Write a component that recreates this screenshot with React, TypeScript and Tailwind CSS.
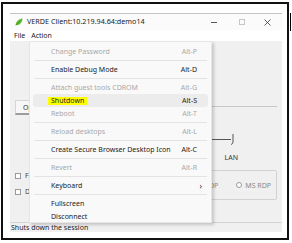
import React from "react";

type MenuEntry =
  | { sep: true }
  | { label: string; shortcut?: string; disabled?: boolean; active?: boolean; arrow?: boolean; sep?: false };

const entries: MenuEntry[] = [
  { label: "Change Password", shortcut: "Alt-P", disabled: true },
  { sep: true },
  { label: "Enable Debug Mode", shortcut: "Alt-D" },
  { sep: true },
  { label: "Attach guest tools CDROM", shortcut: "Alt-G", disabled: true },
  { label: "Shutdown", shortcut: "Alt-S", active: true },
  { label: "Reboot", shortcut: "Alt-T", disabled: true },
  { sep: true },
  { label: "Reload desktops", shortcut: "Alt-L", disabled: true },
  { sep: true },
  { label: "Create Secure Browser Desktop Icon", shortcut: "Alt-C" },
  { sep: true },
  { label: "Revert", shortcut: "Alt-R", disabled: true },
  { sep: true },
  { label: "Keyboard", arrow: true },
  { sep: true },
  { label: "Fullscreen" },
  { label: "Disconnect" },
];

const Leaf = () => (
  <svg width="8" height="8" viewBox="0 0 8 8">
    <path d="M0.5 7.5 C1 3.5 3.5 1 7.5 0.5 C7.2 4.5 5 7 1.5 7.2 Z" fill="#5cb82e" />
    <path d="M1 7 L5 3" stroke="#3f8f1c" strokeWidth="0.6" />
  </svg>
);

const ActionMenu = () => (
  <div className="absolute left-[19px] top-[27px] w-[183px] h-[182px] bg-[#f9f9f9] pt-[3px] shadow-[2px_2px_3px_rgba(0,0,0,0.18)] border border-[#e6e6e6]">
    {entries.map((e, i) =>
      e.sep ? (
        <div key={i} className="h-[5px] flex items-center mx-[4px]">
          <div className="h-px w-full bg-[#e3e3e3]" />
        </div>
      ) : (
        <div
          key={i}
          className={`mx-[3px] h-[13px] flex items-center rounded-[3px] ${e.active ? "bg-[#ececec]" : ""} ${
            e.disabled ? "text-[#a8a8a8]" : "text-[#1b1b1b]"
          }`}
        >
          {e.active ? (
            <span className="ml-[15px] px-[3px] bg-[#ffff00] leading-[8px]">{e.label}</span>
          ) : (
            <span className="ml-[18px]">{e.label}</span>
          )}
          {e.shortcut && <span className="ml-auto mr-[11px]">{e.shortcut}</span>}
          {e.arrow && <span className="ml-auto mr-[6px] text-[8px]">›</span>}
        </div>
      ),
    )}
  </div>
);

export default function App() {
  return (
    <div
      className="w-[292px] h-[243px] bg-white relative overflow-hidden pt-[2px] pl-px text-[7px] leading-none"
      style={{ fontFamily: '"Noto Sans", "Open Sans", sans-serif' }}
    >
      <div className="absolute left-[290px] top-[13px] w-px h-[18px] bg-black" />
      <div className="w-[288px] h-[238px] border-2 border-[#111] pl-[7px] pt-[9px]">
        <div className="w-[272px] h-[219px] flex flex-col relative border-t border-[#c4c4c4]">
          {/* title bar */}
          <div className="h-[16px] bg-[#fbfbfb] flex items-center pl-[5px]">
            <Leaf />
            <span className="ml-[4px] text-[7.2px] text-[#1c1c1c]">VERDE Client:10.219.94.64:demo14</span>
            <div className="ml-auto flex items-center">
              <div className="w-[6px] h-px bg-[#555]" />
              <div className="ml-[22px] w-[6px] h-[6px] border border-[#c6c6c6]" />
              <svg className="ml-[19px] mr-[11px]" width="7" height="7" viewBox="0 0 7 7">
                <path d="M0.5 0.5 L6.5 6.5 M6.5 0.5 L0.5 6.5" stroke="#333" strokeWidth="0.8" />
              </svg>
            </div>
          </div>
          {/* menu bar */}
          <div className="h-[11px] bg-white flex items-center pl-[4px] text-[#1b1b1b]">
            <span>File</span>
            <span className="ml-[6px]">Action</span>
          </div>
          {/* content */}
          <div className="flex-1 bg-[#f0f0f0] pl-[5px] pr-[5px] flex flex-col">
            <div className="mt-[59px] h-[15px] flex items-start">
              <div className="w-[60px] h-[15px] border-l border-t border-[#d6d6d6] border-b-2 border-b-[#9c9c9c] bg-[#f7f7f7] flex items-center pl-[7px] text-[#333]">
                Options
              </div>
              <div className="flex-1 h-[7px] border-b border-[#c8c8c8]" />
            </div>
            <div className="mt-[19px] h-[10px] flex items-center justify-end pr-[42px]">
              <div className="w-[80px] h-px bg-[#555]" />
              <svg width="7" height="11" viewBox="0 0 7 11">
                <path d="M0 5.5 H3" stroke="#555" strokeWidth="1" />
                <path d="M5 0 V8 Q5 10 3 10.5" stroke="#555" strokeWidth="1" fill="none" />
              </svg>
            </div>
            <div className="mt-[10px] flex justify-end pr-[39px] text-[#333]">LAN</div>
            <div className="mt-[9px] flex items-start">
              <div className="flex flex-col gap-[9px] mt-[2px] text-[#444]">
                <div className="flex items-center">
                  <div className="w-[6px] h-[6px] border border-[#9a9a9a] bg-white" />
                  <span className="ml-[4px]">Full</span>
                </div>
                <div className="flex items-center">
                  <div className="w-[6px] h-[6px] border border-[#9a9a9a] bg-white" />
                  <span className="ml-[4px]">Debug</span>
                </div>
              </div>
              <div className="ml-auto w-[130px] h-[30px] border border-[#d2d2d2] rounded-[2px] flex items-center justify-end pr-[5px] text-[#8a8a8a]">
                <span>RDP</span>
                <div className="ml-[18px] w-[6px] h-[6px] rounded-full border border-[#9a9a9a] bg-white" />
                <span className="ml-[3px]">MS RDP</span>
              </div>
            </div>
          </div>
          {/* status bar */}
          <div className="h-[10px] bg-[#f0f0f0] border-t border-[#d4d4d4] flex items-center pl-px text-[#1b1b1b]">
            Shuts down the session
          </div>
          <ActionMenu />
        </div>
      </div>
    </div>
  );
}
